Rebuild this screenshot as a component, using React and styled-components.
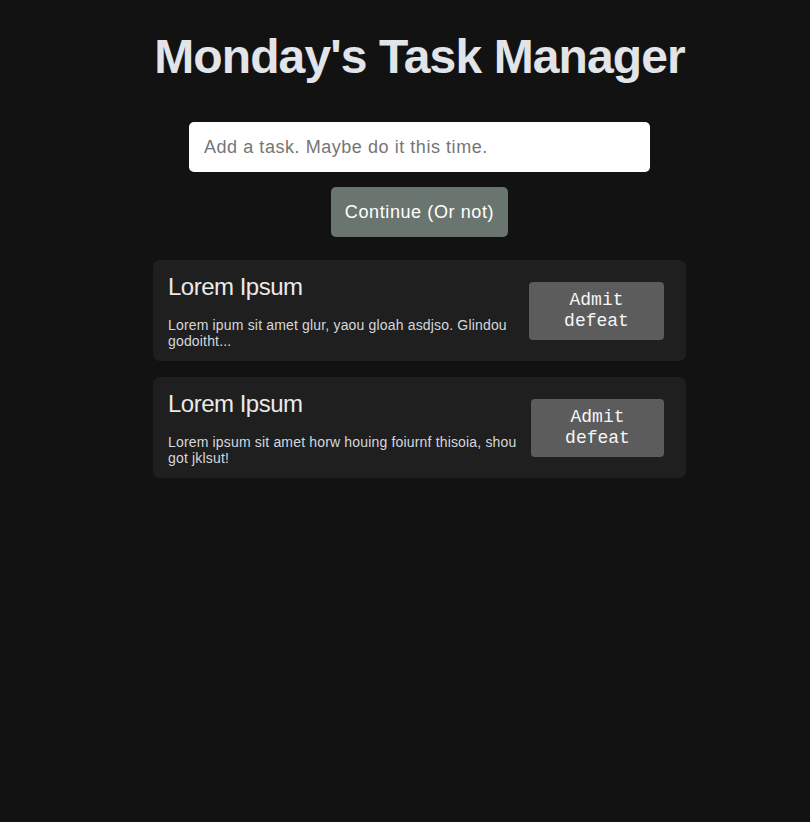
import React from "react";
import styled, { createGlobalStyle } from "styled-components";

const Global = createGlobalStyle`
  html, body { margin: 0; padding: 0; background: #121212; }
  body { font-family: "Liberation Sans", Arial, sans-serif; }
  * { box-sizing: border-box; }
`;

const Page = styled.div`
  min-height: 822px;
  padding: 29px 0 0 29px;
  display: flex;
  flex-direction: column;
  align-items: center;
`;

const Title = styled.h1`
  margin: 0;
  font-size: 48px;
  font-weight: 700;
  letter-spacing: -0.9px;
  color: #e1e4e8;
  line-height: 55px;
`;

const Input = styled.input`
  margin-top: 38px;
  width: 461px;
  height: 50px;
  border: none;
  border-radius: 5px;
  background: #fff;
  padding: 0 15px;
  font-family: "Liberation Sans", Arial, sans-serif;
  font-size: 18px;
  letter-spacing: 0.55px;
  color: #222;
  outline: none;
  &::placeholder { color: #757575; }
`;

const Continue = styled.button`
  margin-top: 15px;
  height: 50px;
  width: 177px;
  padding: 0;
  border: none;
  border-radius: 5px;
  background: #6b7570;
  color: #fff;
  font-family: "Liberation Sans", Arial, sans-serif;
  font-size: 18px;
  letter-spacing: 0.6px;
`;

const List = styled.div`
  margin-top: 23px;
  width: 533px;
  display: flex;
  flex-direction: column;
  gap: 16px;
`;

const Card = styled.div`
  background: #1f1f1f;
  border-radius: 7px;
  padding: 13px 22px 12px 15px;
  display: flex;
  align-items: center;
  gap: 10px;
`;

const Body = styled.div`
  flex: 1;
  min-width: 0;
`;

const CardTitle = styled.div`
  font-size: 24px;
  letter-spacing: -0.5px;
  line-height: 28px;
  color: #eaeaea;
  margin-bottom: 16px;
`;

const Desc = styled.div`
  font-size: 14px;
  letter-spacing: 0.17px;
  line-height: 16px;
  color: #d4d8dc;
`;

const Admit = styled.button`
  flex-shrink: 0;
  width: ${(p) => p.$w}px;
  height: 58px;
  border: none;
  border-radius: 4px;
  background: #5c5c5c;
  color: #f6f6f6;
  font-family: "Courier New", "Liberation Mono", monospace;
  font-size: 18px;
  line-height: 21px;
  padding: 0 20px;
`;

const tasks = [
  {
    title: "Lorem Ipsum",
    desc: "Lorem ipum sit amet glur, yaou gloah asdjso. Glindou godoitht...",
    w: 135,
  },
  {
    title: "Lorem Ipsum",
    desc: "Lorem ipsum sit amet horw houing foiurnf thisoia, shou got jklsut!",
    w: 133,
  },
];

export default function App() {
  return (
    <>
      <Global />
      <Page>
        <Title>Monday's Task Manager</Title>
        <Input placeholder="Add a task. Maybe do it this time." />
        <Continue>Continue (Or not)</Continue>
        <List>
          {tasks.map((t, i) => (
            <Card key={i}>
              <Body>
                <CardTitle>{t.title}</CardTitle>
                <Desc>{t.desc}</Desc>
              </Body>
              <Admit $w={t.w}>Admit defeat</Admit>
            </Card>
          ))}
        </List>
      </Page>
    </>
  );
}
